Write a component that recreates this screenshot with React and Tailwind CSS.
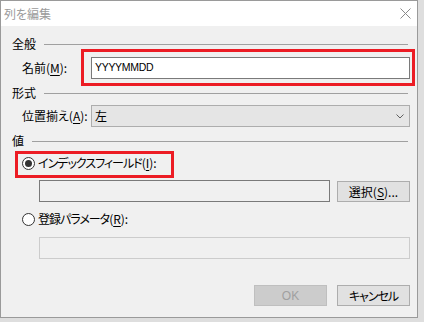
import React from 'react'

const jp = "font-['Meiryo_UI','Noto_Sans_CJK_JP',sans-serif] [font-feature-settings:'palt']"

function U({ children }) {
  return <span className="underline underline-offset-2">{children}</span>
}

function GroupHeader({ label }) {
  return (
    <div className="flex h-[14px] items-center">
      <span className="text-[12px] leading-none text-black">{label}</span>
      <div className="ml-[8px] mr-[2px] h-px flex-1 bg-[#a0a0a0]" />
    </div>
  )
}

function Radio({ checked }) {
  return (
    <div className="flex h-[13px] w-[13px] items-center justify-center rounded-full border border-[#333] bg-white">
      {checked && <div className="h-[7px] w-[7px] rounded-full bg-[#333]" />}
    </div>
  )
}

function Button({ children, disabled }) {
  return (
    <div
      className={`flex h-[21px] w-[73px] items-center justify-center border text-[12px] leading-none ${
        disabled ? 'border-[#bfbfbf] bg-[#cccccc] text-[#a0a0a0]' : 'border-[#adadad] bg-[#e1e1e1] text-black'
      }`}
    >
      {children}
    </div>
  )
}

export default function App() {
  return (
    <div className={`h-[322px] w-[424px] bg-[#dedede] ${jp}`}>
      <div className="flex h-[318px] w-[418px] flex-col border border-[#9a9a9a] bg-[#f0f0f0]">
        {/* title bar */}
        <div className="flex h-[25px] items-center justify-between bg-white pl-[3px] pr-[6px]">
          <span className="text-[12px] text-[#9b9b9b]">列を編集</span>
          <svg width="11" height="11" viewBox="0 0 11 11">
            <path d="M0.5 0.5 L10.5 10.5 M10.5 0.5 L0.5 10.5" stroke="#8a8a8a" strokeWidth="1" />
          </svg>
        </div>

        {/* body */}
        <div className="relative flex flex-1 flex-col pl-[11px] pr-[7px]">
          <div className="mt-[11px]">
            <GroupHeader label="全般" />
          </div>
          <div className="mt-[6px] flex h-[22px] items-center pl-[10px]">
            <span className="w-[69px] text-[12px] text-black">
              名前(<U>M</U>):
            </span>
            <div className="flex h-[22px] flex-1 items-center border border-[#7a7a7a] bg-white pl-[3px] font-['Liberation_Sans',sans-serif] text-[10.5px] tracking-[-0.3px] text-black">
              YYYYMMDD
            </div>
          </div>

          <div className="mt-[7px]">
            <GroupHeader label="形式" />
          </div>
          <div className="mt-[5px] flex h-[22px] items-center pl-[10px]">
            <span className="w-[69px] text-[12px] text-black">
              位置揃え(<U>A</U>):
            </span>
            <div className="flex h-[22px] flex-1 items-center justify-between border border-[#adadad] bg-[#e5e5e5] pl-[3px] pr-[5px] text-[12px] text-black">
              <span>左</span>
              <svg width="8" height="5" viewBox="0 0 8 5">
                <path d="M0.5 0.5 L4 4 L7.5 0.5" fill="none" stroke="#606060" strokeWidth="1" />
              </svg>
            </div>
          </div>

          <div className="mt-[7px]">
            <GroupHeader label="値" />
          </div>
          <div className="mt-[8px] flex h-[14px] items-center pl-[10px]">
            <Radio checked />
            <span className="ml-[3px] text-[12px] text-black">
              <span className="tracking-[-1px]">インデックスフィールド</span>(<U>I</U>):
            </span>
          </div>
          <div className="mt-[10px] flex h-[22px] pl-[27px]">
            <div className="h-[22px] w-[291px] border border-[#7a7a7a] bg-[#f0f0f0]" />
            <div className="ml-[7px] mt-[1px]">
              <Button>
                選択(<U>S</U>)...
              </Button>
            </div>
          </div>
          <div className="mt-[10px] flex h-[14px] items-center pl-[10px]">
            <Radio />
            <span className="ml-[3px] text-[12px] text-black">
              <span className="tracking-[-1px]">登録パラメータ</span>(<U>R</U>):
            </span>
          </div>
          <div className="mt-[11px] pl-[27px]">
            <div className="h-[22px] border border-[#cccccc] bg-[#f0f0f0]" />
          </div>

          <div className="mt-[26px] flex justify-end gap-[10px]">
            <Button disabled>
              <span className="font-['Liberation_Sans',sans-serif]">OK</span>
            </Button>
            <Button>
              <span className="tracking-[-1px]">キャンセル</span>
            </Button>
          </div>

          {/* red highlight annotations */}
          <div className="pointer-events-none absolute left-[80px] top-[23px] h-[37px] w-[334px] border-[3px] border-[#ec1c24]" />
          <div className="pointer-events-none absolute left-[14px] top-[125px] h-[27px] w-[159px] border-[3px] border-[#ec1c24]" />
        </div>
      </div>
    </div>
  )
}
